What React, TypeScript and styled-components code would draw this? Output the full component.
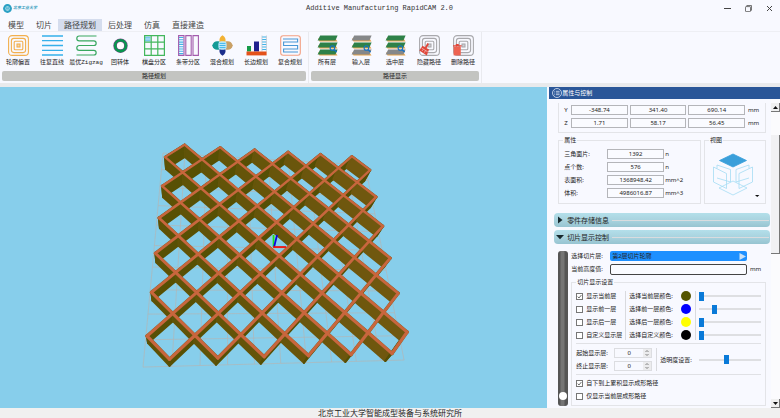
import React, { useState } from 'react';
import styled, { createGlobalStyle, css } from 'styled-components';

const cjk = '"Noto Sans CJK SC", sans-serif';
const ui = `"Noto Sans", ${cjk}`;

const GlobalStyle = createGlobalStyle`
  *, *::before, *::after { box-sizing: border-box; }
  html, body { margin: 0; padding: 0; }
  body { font-family: ${ui}; font-size: 6px; line-height: 10px; color: #222; background: #f8f9ff; }
  button, input, select { font: inherit; color: inherit; margin: 0; padding: 0; }
  button { border: 0; background: none; }
`;

const Window = styled.div`
  display: flex;
  flex-direction: column;
  min-height: 100vh;
`;

/* ---------- title bar ---------- */
const TitleBar = styled.header`
  display: flex;
  align-items: center;
  height: 19px;
  padding-bottom: 3px;
`;
const Brand = styled.div`
  display: flex;
  align-items: center;
  gap: 1px;
  width: 42px;
  padding-left: 3px;
  color: #3a9fc0;
  font-size: 4px;
  font-style: italic;
  font-weight: 700;
  white-space: nowrap;
`;
const Title = styled.h1`
  flex: 1;
  margin: 0;
  text-align: center;
  font: 400 7px/10px "Liberation Mono", monospace;
  color: #333;
`;
const WindowButton = styled.button`
  display: grid;
  place-items: center;
  width: 21px;
  height: 16px;
`;

/* ---------- menu ---------- */
const Menu = styled.nav`
  display: flex;
  height: 12px;
  padding-left: 2px;
`;
const MenuItem = styled.button<{ $active?: boolean }>`
  padding: 0 6px;
  font: 400 8px/12px ${cjk};
  color: #444;
  background: ${(p) => (p.$active ? '#d5ddee' : 'transparent')};
`;

/* ---------- ribbon ---------- */
const Ribbon = styled.div`
  display: flex;
  border-top: 1px solid #eeeff4;
  border-bottom: 4px solid #e9eaec;
`;
const RibbonGroup = styled.section`
  display: flex;
  flex-direction: column;
  gap: 3px;
  padding: 3px 1px 2px;
  border-right: 1px solid #e9eaef;
`;
const Tools = styled.div`
  display: flex;
`;
const Tool = styled.button`
  display: flex;
  flex-direction: column;
  align-items: center;
  gap: 1px;
  width: 34px;
  font: 400 6px/11px "Liberation Mono", ${cjk};
  white-space: nowrap;
`;
const GroupLabel = styled.h2`
  margin: 0 1px;
  border-radius: 2px;
  background: #c3c4c1;
  text-align: center;
  font: 400 6px/10px ${cjk};
`;

/* ---------- work area ---------- */
const WorkArea = styled.main`
  flex: 1;
  display: grid;
  grid-template-columns: minmax(0, 2.37fr) minmax(0, 1fr);
  gap: 2px;
`;
const Viewport = styled.div`
  display: flex;
  background: #87ceeb;
  svg { width: 100%; height: 100%; }
`;
const Panel = styled.aside`
  display: flex;
  flex-direction: column;
`;
const PanelHeader = styled.header`
  display: flex;
  align-items: center;
  gap: 0;
  height: 12px;
  padding-left: 3px;
  background: #2a5698;
  color: #fff;
  font-size: 6px;
  h2 { margin: 0; font: 400 6px/12px ${cjk}; }
`;
const PanelScroll = styled.div`
  flex: 1;
  display: flex;
`;
const PanelBody = styled.div`
  flex: 1;
  min-width: 0;
  padding: 4px 1px 1px 5px;
`;
const frame = css`
  border: 1px solid #e3e4e8;
  min-width: 0;
  margin: 0;
`;
const Extents = styled.div`
  ${frame}
  border-top: 0;
  margin: 0 4px;
  padding: 2px 5px 4px;
  display: grid;
  grid-template-columns: 5px 1fr 1fr 1fr 13px;
  gap: 3px 2px;
`;
const Field = styled.input`
  width: 100%;
  min-width: 0;
  height: 10px;
  border: 1px solid #b4b5b9;
  background: #fafbff;
  text-align: center;
  line-height: 8px;
`;
const Unit = styled.span`
  padding-left: 1px;
`;
const InfoRow = styled.div`
  display: grid;
  grid-template-columns: minmax(0, 1fr) 62px;
  gap: 3px;
  margin: 3px 4px 0;
`;
const Group = styled.fieldset`
  ${frame}
  padding: 5px 4px 4px;
`;
const Legend = styled.legend`
  height: 8px;
  padding: 0 1px;
  line-height: 8px;
`;
const Stats = styled.div`
  display: grid;
  grid-template-columns: 43px 57px auto;
  row-gap: 3px;
  padding: 0 1px 1px;
`;
const ViewPicker = styled.button`
  display: flex;
  align-items: flex-end;
  width: 100%;
  height: 50px;
  padding: 0 0 2px 1px;
`;
const Fold = styled.button<{ $gap: number }>`
  display: flex;
  align-items: center;
  width: 100%;
  height: 14px;
  margin-top: ${(p) => p.$gap}px;
  padding: 0 1px 0 2px;
  border-radius: 4px;
  background: linear-gradient(#b3dfea, #a9d3df 50%, #97c4d1);
  font: 400 7px/14px ${cjk};
  &::after {
    content: '';
    flex: 1;
    height: 1px;
    margin-left: 3px;
    background: #d9dcdf;
  }
  svg { margin-right: 3px; }
`;
const SliceSection = styled.div`
  display: flex;
  gap: 3px;
  margin: 7px 4px 0;
`;
const HeightSlider = styled.input`
  appearance: none;
  writing-mode: vertical-lr;
  direction: rtl;
  width: 10px;
  padding: 6px 0;
  border-radius: 3px;
  background: linear-gradient(90deg, #555 2px, #757575 3px, #757575 6px, #555 7px);
  &::-webkit-slider-thumb {
    appearance: none;
    width: 8px;
    height: 8px;
    border-radius: 50%;
    background: #fff;
  }
`;
const SliceColumn = styled.div`
  flex: 1;
  min-width: 0;
`;
const SliceLine = styled.div`
  display: grid;
  grid-template-columns: 37px minmax(0, 1fr) 17px;
  column-gap: 2px;
  margin-bottom: 3px;
`;
const LayerPicker = styled.div`
  display: flex;
  align-items: center;
  height: 10px;
  padding-right: 1px;
  border-radius: 2px;
  background: #1e90ff;
  select {
    appearance: none;
    flex: 1;
    min-width: 0;
    height: 10px;
    padding-left: 2px;
    border: 0;
    background: transparent;
  }
`;
const HeightField = styled(Field)`
  height: 11px;
  border-color: #444;
  border-radius: 2px;
`;
const LayerGrid = styled.div`
  display: grid;
  grid-template-columns: 50px 70px minmax(0, 1fr);
`;
const Stack = styled.div<{ $pad?: string; $rule?: boolean }>`
  display: flex;
  flex-direction: column;
  gap: 3px;
  padding: ${(p) => p.$pad ?? 0};
  border-right: ${(p) => (p.$rule ? '1px solid #d9dade' : 0)};
`;
const Check = styled.label`
  display: flex;
  align-items: center;
  gap: 3px;
  height: 10px;
  white-space: nowrap;
  input {
    appearance: none;
    display: grid;
    width: 7px;
    height: 7px;
    flex: none;
    border: 1px solid #777;
    background: #fff;
  }
  input:checked {
    background: #fff url("data:image/svg+xml,%3Csvg xmlns='http://www.w3.org/2000/svg' viewBox='0 0 5 5'%3E%3Cpath d='M.7 2.6 2 4 4.4 1' fill='none' stroke='%23333' stroke-width='.7'/%3E%3C/svg%3E");
  }
`;
const ColorLine = styled.div`
  display: flex;
  justify-content: space-between;
  height: 10px;
  white-space: nowrap;
`;
const Swatch = styled.button<{ $color: string }>`
  width: 10px;
  height: 10px;
  border-radius: 50%;
  background: ${(p) => p.$color};
`;
const Slider = styled.input`
  appearance: none;
  width: 100%;
  min-width: 0;
  height: 10px;
  background: linear-gradient(transparent 4px, #dedfe2 4px, #dedfe2 6px, transparent 6px);
  &::-webkit-slider-thumb {
    appearance: none;
    width: 5px;
    height: 9px;
    background: #0a7ad8;
  }
`;
const Rule = styled.hr`
  height: 1px;
  margin: 3px 0;
  border: 0;
  background: #e0e1e5;
`;
const RangeGrid = styled.div`
  display: grid;
  grid-template-columns: 81px 39px minmax(0, 1fr);
  align-items: center;
  padding-top: 1px;
`;
const SpinLine = styled.label`
  display: grid;
  grid-template-columns: 1fr 38px;
`;
const Spin = styled.span`
  display: flex;
  height: 10px;
  border: 1px solid #dcdde1;
  input {
    flex: 1;
    min-width: 0;
    height: 8px;
    border: 0;
    background: transparent;
    text-align: center;
  }
  svg { background: #ececee; }
`;
const ScrollBar = styled.div`
  display: flex;
  flex-direction: column;
  width: 9px;
  padding-top: 4px;
  background: #fbfbfd;
`;
const ScrollButton = styled.button`
  display: grid;
  place-items: center;
  height: 9px;
  background: #f0f0f0;
  border-right: 1px solid #777;
  border-bottom: 1px solid #777;
`;
const ScrollTrack = styled.div`
  flex: 1;
  padding-top: 23px;
`;
const ScrollThumb = styled.div`
  height: 45%;
  background: #f1f1f3;
  border-right: 1px solid #777;
  border-bottom: 1px solid #777;
`;
const StatusBar = styled.footer`
  height: 10px;
  background: #f0f0f0;
  text-align: center;
  font: 400 8px/10px ${cjk};
`;

/* ---------- lattice model ---------- */
type Pt = [number, number];

/* Projective map from the unit square to the quad a(0,0) b(1,0) c(1,1) d(0,1). */
function projector(a: Pt, b: Pt, c: Pt, d: Pt) {
  const dx1 = b[0] - c[0], dx2 = d[0] - c[0], sx = a[0] - b[0] + c[0] - d[0];
  const dy1 = b[1] - c[1], dy2 = d[1] - c[1], sy = a[1] - b[1] + c[1] - d[1];
  const det = dx1 * dy2 - dx2 * dy1;
  const g = (sx * dy2 - dx2 * sy) / det;
  const h = (dx1 * sy - sx * dy1) / det;
  return (s: number, t: number): Pt => {
    const w = g * s + h * t + 1;
    return [
      ((b[0] - a[0] + g * b[0]) * s + (d[0] - a[0] + h * d[0]) * t + a[0]) / w,
      ((b[1] - a[1] + g * b[1]) * s + (d[1] - a[1] + h * d[1]) * t + a[1]) / w,
    ];
  };
}
const CELLS = 12;
const topMap = projector([165, 157], [370, 170], [407, 332], [147, 336]);
const baseMap = projector([166, 169], [364, 181], [400, 340], [148, 343]);
const floorMap = projector([163, 153], [365, 165], [404, 360], [143, 367]);
const top = (u: number, v: number) => topMap(u / CELLS, (v - 1) / 10);
const base = (u: number, v: number) => baseMap(u / CELLS, (v - 1) / 10);
const pts = (list: Pt[]) => list.map((p) => p.map((n) => n.toFixed(1)).join(',')).join(' ');

const walls: { face: string; strip: string; down: boolean; v: number; shade: number }[] = [];
for (let v = 0; v < CELLS; v++) {
  for (let u = 0; u < CELLS; u++) {
    const down = (u + v) % 2 === 1;
    const [p, q]: [Pt, Pt] = down ? [[u, v], [u + 1, v + 1]] : [[u, v + 1], [u + 1, v]];
    const a = top(...p), b = top(...q), c = base(...q), d = base(...p);
    walls.push({ face: pts([a, b, c, d]), strip: pts([a, b]), down, v, shade: u / CELLS });
  }
}
const wallColor = (down: boolean, s: number) =>
  down ? `rgb(${Math.round(94 + 20 * s)},${Math.round(82 + 6 * s)},${Math.round(6 + 10 * s)})`
       : `rgb(${Math.round(88 - 4 * s)},${Math.round(80 - 2 * s)},4)`;

const LatticeView = () => (
  <svg viewBox="0 87 547 321" role="img" aria-label="晶格模型">
    <g stroke="#b2b6b6" strokeWidth="0.7">
      {Array.from({ length: 11 }, (_, i) => {
        const [a, b, c, d] = [floorMap(i / 10, 0), floorMap(i / 10, 1), floorMap(0, i / 10), floorMap(1, i / 10)];
        return (
          <g key={i}>
            <line x1={a[0]} y1={a[1]} x2={b[0]} y2={b[1]} />
            <line x1={c[0]} y1={c[1]} x2={d[0]} y2={d[1]} />
          </g>
        );
      })}
    </g>
    <g strokeWidth="2" strokeLinejoin="round">
      {walls.map((w, i) => {
        const color = wallColor(w.down, w.shade);
        return <polygon key={i} points={w.face} fill={color} stroke={color} />;
      })}
    </g>
    <g stroke="#86602a" strokeLinecap="round">
      {walls.map((w, i) => <polyline key={i} points={w.strip} strokeWidth={2.5 + w.v * 0.09} />)}
    </g>
    <g stroke="#c9663d" strokeLinecap="round">
      {walls.map((w, i) => <polyline key={i} points={w.strip} strokeWidth={2 + w.v * 0.09} />)}
    </g>
    <g strokeWidth="1.8">
      <path d="M273.5 247V235" stroke="#1be01b" />
      <path d="M274 247L277 235" stroke="#0808e0" />
      <path d="M273 247H286" stroke="#f01010" />
    </g>
  </svg>
);

/* ---------- icons ---------- */
const Icon = ({ children }: { children: React.ReactNode }) => (
  <svg width="21" height="21" viewBox="0 0 21 21" fill="none" aria-hidden="true">{children}</svg>
);
const Nested = ({ color }: { color: string }) => (
  <g stroke={color} strokeWidth="1.1">
    <rect x="0.6" y="0.6" width="19.8" height="19.8" rx="3.5" />
    <rect x="3.4" y="3.4" width="14.2" height="14.2" rx="2.5" />
    <rect x="6.2" y="6.2" width="8.6" height="8.6" rx="1" />
    <rect x="9" y="9" width="3" height="3" fill={color} fillOpacity="0.5" />
  </g>
);
const Layers = ({ colors }: { colors: string[] }) => (
  <Icon>
    {[2, 1, 0].map((i) => (
      <g key={i} transform={`translate(0 ${i * 7})`}>
        <path d="M1 3.5L2.5 6.6H20.5L18.5 3.5Z" fill="#e5a44c" />
        <path d="M3.2 0.6H20.6L18.4 5.4H0.6Z" fill={colors[i]} />
      </g>
    ))}
    <circle cx="15.4" cy="13" r="2.3" stroke="#1673c4" strokeWidth="1.1" />
    <path d="M17.2 14.8L19.6 17" stroke="#1673c4" strokeWidth="1.4" />
  </Icon>
);
const GREEN = '#2e8148';
const GREY = '#868889';

const pathTools: [string, React.ReactNode][] = [
  ['轮廓偏置', <Icon><Nested color="#f2b04f" /></Icon>],
  ['往复直线', <Icon><path d="M0 1H21M0 5.7H21M0 10.5H21M0 15.3H21M0 20H21" stroke="#35b0ea" strokeWidth="1.3" /></Icon>],
  ['最优Zigzag', <Icon><path d="M20.5 1H3.2a2.4 2.4 0 0 0 0 4.8H17.8a2.35 2.35 0 0 1 0 4.7H3.2a2.4 2.4 0 0 0 0 4.8H17.8a2.35 2.35 0 0 1 0 4.7H0.5" stroke="#39a860" strokeWidth="1.2" /></Icon>],
  ['回转体', <Icon><circle cx="10.5" cy="10.7" r="5.4" fill="#fff" stroke="#7b4a8c" strokeWidth="3.6" /><circle cx="10.5" cy="10.7" r="5.4" stroke="#07964d" strokeWidth="2.6" /></Icon>],
  ['棋盘分区', <Icon><path d="M1 2.2H6.5M1 4H6.5M1 5.8H6.5" stroke="#41b3e6" /><path d="M0.6 0.6H20.4V20.4H0.6ZM7.2 0.6V20.4M13.8 0.6V20.4M0.6 7.2H20.4M0.6 13.8H20.4" stroke="#43b75c" strokeWidth="1.2" /></Icon>],
  ['条带分区', <Icon><path d="M1 2.5H5.5M1 4.8H5.5M1 7.1H5.5M1 9.4H5.5M1 11.7H5.5M1 14H5.5M1 16.3H5.5M1 18.6H5.5" stroke="#41b3e6" strokeWidth="1.1" /><path d="M0.6 0.6H6V20.4H0.6ZM7.8 0.6H13.2V20.4H7.8ZM15 0.6H20.4V20.4H15Z" stroke="#a35cad" strokeWidth="1.1" /></Icon>],
  ['混合规划', (
    <Icon>
      <path d="M10.5 0.3C13 1.8 14 3.6 13.4 7H7.6C7 3.6 8 1.8 10.5 0.3Z" fill="#f2b233" />
      <path d="M10.5 20.7C13 19.2 14 17.4 13.4 14H7.6C7 17.4 8 19.2 10.5 20.7Z" fill="#1c2f8c" />
      <path d="M0.2 10.5C1.4 6.6 4 5.4 7.5 6.6V14.4C4 15.6 1.4 14.4 0.2 10.5Z" fill="#139b96" />
      <path d="M20.8 10.5C19.6 6.6 17 5.4 13.5 6.6V14.4C17 15.6 19.6 14.4 20.8 10.5Z" fill="#c9a065" />
      <rect x="6.4" y="6.2" width="8.2" height="8.6" rx="3" fill="#bdeafa" />
      <path d="M7.5 8.4H13.5M7.5 10.5H13.5M7.5 12.6H13.5" stroke="#35b0ea" strokeWidth="0.9" />
    </Icon>
  )],
  ['长边规划', (
    <Icon>
      <path d="M1 11H5V16.5H1Z" fill="#159a48" />
      <path d="M8 6.5H13V16.5H8Z" fill="#20208e" />
      <path d="M16 0.5V16.5M20.4 0.5V16.5" stroke="#b9bcc4" strokeWidth="0.7" />
      <path d="M16.2 2H20.2M16.2 4.5H20.2M16.2 7H20.2M16.2 9.5H20.2M16.2 12H20.2M16.2 14.5H20.2" stroke="#41b3e6" strokeWidth="1.2" />
      <path d="M0.5 16.5H20.6V20.4H0.5Z" fill="#e4521b" />
    </Icon>
  )],
  ['复合规划', <Icon><rect x="0.7" y="0.7" width="19.6" height="19.6" rx="2.5" stroke="#f3a083" strokeWidth="1.1" /><path d="M3 4H17.6V7H3.6V10.5H17.6V14H3.6V17H18" stroke="#4a98d6" strokeWidth="1.1" /></Icon>],
];
const displayTools: [string, React.ReactNode][] = [
  ['所有层', <Layers colors={[GREEN, GREEN, GREEN]} />],
  ['输入层', <Layers colors={[GREY, GREEN, GREY]} />],
  ['选中层', <Layers colors={[GREEN, GREEN, GREY]} />],
  ['隐藏路径', (
    <Icon>
      <Nested color="#a9a9ad" />
      <path d="M9.2 8.5L6.6 13" stroke="#e0473a" strokeWidth="1.8" />
      <path d="M3.5 10.7L10 14.6L7.8 20.5L0.3 15.6Z" fill="#e0473a" />
      <path d="M2.6 13L8.8 16.9M3 16L4.2 14.4M5.3 17.6L6.4 15.8" stroke="#f8f9ff" strokeWidth="0.5" />
    </Icon>
  )],
  ['删除路径', (
    <Icon>
      <Nested color="#a9a9ad" />
      <path d="M0.6 11.6H7.8V20.4H0.6Z" fill="#ee6352" />
      <path d="M0 10.8H8.6M2.8 9.6H5.8" stroke="#e0473a" strokeWidth="1.2" />
    </Icon>
  )],
];

const ViewCube = () => (
  <svg width="50" height="46" viewBox="709 151 50 46" fill="none" stroke="#a5dcf4" strokeWidth="0.8" aria-hidden="true">
    <path d="M732 181L746 188L732 195L718 188Z" />
    <path d="M712.5 167L725.5 173.5V188.5L712.5 182ZM751.5 167L738 173.5V188.5L751.5 182Z" />
    <path d="M716 168.5V165L729.5 169.5V182L716 178M748 168.5V165L735 169.5V182L748 178" />
    <path d="M732 154L745.5 160.5L732 167L718.5 160.5Z" fill="#3a9fda" stroke="#3a9fda" />
    <path d="M754 195H758.4L756.2 197Z" fill="#111" stroke="none" />
  </svg>
);

const Triangle = ({ d }: { d: string }) => (
  <svg width="8" height="8" viewBox="0 0 8 8" aria-hidden="true"><path d={d} fill="#17282d" /></svg>
);

/* ---------- data ---------- */
const menus = ['模型', '切片', '路径规划', '后处理', '仿真', '直接建造'];
const extents = [
  { axis: 'Y', values: ['-348.74', '341.40', '690.14'] },
  { axis: 'Z', values: ['1.71', '58.17', '56.45'] },
];
const stats = [
  { id: 'facets', label: '三角面片:', value: '1392', unit: 'n' },
  { id: 'points', label: '点个数:', value: '576', unit: 'n' },
  { id: 'area', label: '表面积:', value: '1368948.42', unit: 'mm^2' },
  { id: 'volume', label: '体积:', value: '4986016.87', unit: 'mm^3' },
];
const layers = [
  { show: '显示当前层', pick: '选择当前层颜色:', color: '#555500', on: true, level: 0 },
  { show: '显示前一层', pick: '选择前一层颜色:', color: '#0000ff', on: false, level: 22 },
  { show: '显示后一层', pick: '选择后一层颜色:', color: '#ffff00', on: false, level: 0 },
  { show: '自定义显示层', pick: '选择自定义颜色:', color: '#000000', on: false, level: 0 },
];

const Ribbons = ({ title, tools }: { title: string; tools: [string, React.ReactNode][] }) => (
  <RibbonGroup>
    <Tools>
      {tools.map(([label, icon]) => <Tool key={label}>{icon}<span>{label}</span></Tool>)}
    </Tools>
    <GroupLabel>{title}</GroupLabel>
  </RibbonGroup>
);

const Spinner = ({ label }: { label: string }) => (
  <SpinLine>
    <span>{label}</span>
    <Spin>
      <input defaultValue="0" inputMode="numeric" />
      <svg width="8" height="8" viewBox="0 0 8 8" aria-hidden="true">
        <path d="M2.5 3L4 1.5L5.5 3M2.5 5L4 6.5L5.5 5" fill="none" stroke="#666" strokeWidth="0.8" />
      </svg>
    </Spin>
  </SpinLine>
);

export default function App() {
  const [active, setActive] = useState('路径规划');
  return (
    <Window>
      <GlobalStyle />
      <TitleBar>
        <Brand>
          <svg width="9" height="9" viewBox="0 0 9 9" aria-hidden="true">
            <circle cx="4.5" cy="4.5" r="4.4" fill="#2aa0c4" />
            <circle cx="4.5" cy="4.5" r="2.2" fill="#bfe6f0" />
            <path d="M3.4 5.6V3.6H4.2V5.6M4.9 5.6V3.6H5.7V5.6" stroke="#2aa0c4" strokeWidth="0.6" fill="none" />
          </svg>
          <span>北京工业大学</span>
        </Brand>
        <Title>Additive Manufacturing RapidCAM 2.0</Title>
        <WindowButton aria-label="最小化">
          <svg width="7" height="7" viewBox="0 0 7 7"><path d="M0 3.5H7" stroke="#444" /></svg>
        </WindowButton>
        <WindowButton aria-label="还原">
          <svg width="7" height="7" viewBox="0 0 7 7" fill="none" stroke="#555" strokeWidth="0.8">
            <rect x="0.5" y="1.6" width="5" height="5" rx="0.6" /><path d="M1.8 1.5V0.5H6.5V5.3H5.6" />
          </svg>
        </WindowButton>
        <WindowButton aria-label="关闭">
          <svg width="7" height="7" viewBox="0 0 7 7"><path d="M1 1L6 6M6 1L1 6" stroke="#444" /></svg>
        </WindowButton>
      </TitleBar>

      <Menu>
        {menus.map((m) => (
          <MenuItem key={m} $active={m === active} onClick={() => setActive(m)}>{m}</MenuItem>
        ))}
      </Menu>

      <Ribbon>
        <Ribbons title="路径规划" tools={pathTools} />
        <Ribbons title="路径显示" tools={displayTools} />
      </Ribbon>

      <WorkArea>
        <Viewport><LatticeView /></Viewport>
        <Panel>
          <PanelHeader>
            <svg width="10" height="10" viewBox="0 0 10 10" fill="none" stroke="#dfe8f5" strokeWidth="0.8" aria-hidden="true">
              <circle cx="5" cy="5" r="4.5" /><path d="M2.4 3.3H3.1M3.9 3.3H7.6M2.4 5H3.1M3.9 5H7.6M2.4 6.7H3.1M3.9 6.7H7.6" />
            </svg>
            <h2>属性与控制</h2>
          </PanelHeader>
          <PanelScroll>
            <PanelBody>
              <Extents>
                {extents.map(({ axis, values }) => (
                  <React.Fragment key={axis}>
                    <span>{axis}</span>
                    {values.map((v) => <Field key={v} defaultValue={v} aria-label={axis} />)}
                    <Unit>mm</Unit>
                  </React.Fragment>
                ))}
              </Extents>

              <InfoRow>
                <Group>
                  <Legend>属性</Legend>
                  <Stats>
                    {stats.map((s) => (
                      <React.Fragment key={s.id}>
                        <label htmlFor={s.id}>{s.label}</label>
                        <Field id={s.id} defaultValue={s.value} />
                        <Unit>{s.unit}</Unit>
                      </React.Fragment>
                    ))}
                  </Stats>
                </Group>
                <Group>
                  <Legend>视图</Legend>
                  <ViewPicker aria-label="选择视图"><ViewCube /></ViewPicker>
                </Group>
              </InfoRow>

              <Fold $gap={9} aria-expanded="false"><Triangle d="M2 0.5L6.5 4L2 7.5Z" />零件存储信息</Fold>
              <Fold $gap={3} aria-expanded="true"><Triangle d="M0 2L8 2L4 6.2Z" />切片显示控制</Fold>

              <SliceSection>
                <HeightSlider type="range" defaultValue={0} aria-label="切片层" />
                <SliceColumn>
                  <SliceLine>
                    <label htmlFor="layer">选择切片层:</label>
                    <LayerPicker>
                      <select id="layer"><option>第2层切片轮廓</option></select>
                      <svg width="7" height="7" viewBox="0 0 7 7" aria-hidden="true"><path d="M0.5 0L7 3.5L0.5 7Z" fill="#c9e0f6" /></svg>
                    </LayerPicker>
                  </SliceLine>
                  <SliceLine>
                    <label htmlFor="height">当前高度值:</label>
                    <HeightField id="height" />
                    <Unit>mm</Unit>
                  </SliceLine>

                  <Group>
                    <Legend>切片显示设置</Legend>
                    <LayerGrid>
                      <Stack $rule>
                        {layers.map((l) => (
                          <Check key={l.show}><input type="checkbox" defaultChecked={l.on} />{l.show}</Check>
                        ))}
                      </Stack>
                      <Stack $rule $pad="0 4px 0 3px">
                        {layers.map((l) => (
                          <ColorLine key={l.pick}>{l.pick}<Swatch $color={l.color} aria-label={l.pick} /></ColorLine>
                        ))}
                      </Stack>
                      <Stack $pad="0 0 0 3px">
                        {layers.map((l) => (
                          <Slider key={l.pick} type="range" defaultValue={l.level} aria-label={l.pick} />
                        ))}
                      </Stack>
                    </LayerGrid>
                    <Rule />
                    <RangeGrid>
                      <Stack $rule $pad="0 4px 0 0">
                        <Spinner label="起始显示层:" />
                        <Spinner label="终止显示层:" />
                      </Stack>
                      <Stack $pad="0 0 0 3px"><label htmlFor="opacity">透明度设置:</label></Stack>
                      <Stack $pad="0 0 0 3px"><Slider id="opacity" type="range" defaultValue={44} /></Stack>
                    </RangeGrid>
                    <Rule />
                    <Stack>
                      <Check><input type="checkbox" defaultChecked />自下到上累积显示成形路径</Check>
                      <Check><input type="checkbox" />仅显示当前层成形路径</Check>
                    </Stack>
                  </Group>
                </SliceColumn>
              </SliceSection>
            </PanelBody>
            <ScrollBar>
              <ScrollButton aria-label="向上滚动">
                <svg width="5" height="3" viewBox="0 0 5 3"><path d="M0 3L2.5 0L5 3Z" fill="#111" /></svg>
              </ScrollButton>
              <ScrollTrack><ScrollThumb /></ScrollTrack>
              <ScrollButton aria-label="向下滚动">
                <svg width="5" height="3" viewBox="0 0 5 3"><path d="M0 0L2.5 3L5 0Z" fill="#111" /></svg>
              </ScrollButton>
            </ScrollBar>
          </PanelScroll>
        </Panel>
      </WorkArea>
      <StatusBar>北京工业大学智能成型装备与系统研究所</StatusBar>
    </Window>
  );
}
